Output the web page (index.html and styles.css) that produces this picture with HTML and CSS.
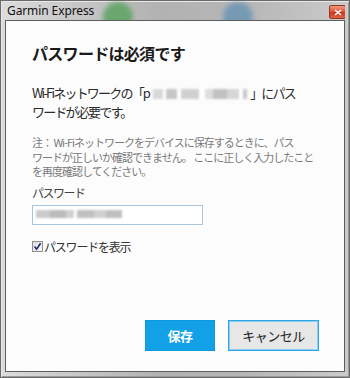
FILE: index.html
```html
<!DOCTYPE html>
<html lang="ja">
<head>
<meta charset="utf-8">
<link rel="stylesheet" href="styles.css">
</head>
<body>
<div class="window">
  <div class="titlebar">
    <span class="glow glow-green"></span>
    <span class="glow glow-blue"></span>
    <span class="title">Garmin Express</span>
    <span class="close"><svg width="8" height="7" viewBox="0 0 8 7"><path d="M1 1 L7 6 M7 1 L1 6" stroke="#fff" stroke-width="1.6"/></svg></span>
  </div>
  <div class="client">
    <h1 class="heading">パスワードは必須です</h1>
    <p class="body-text">Wi-Fiネットワークの「p<span class="blur blur-ssid"></span>」にパス<br>ワードが必要です。</p>
    <p class="note">注： Wi-Fiネットワークをデバイスに保存するときに、パス<br>ワードが正しいか確認できません。 ここに正しく入力したこと<br>を再度確認してください。</p>
    <div class="label">パスワード</div>
    <div class="input"><span class="blur blur-pass"></span></div>
    <label class="check-row">
      <span class="checkbox"><svg width="9" height="9" viewBox="0 0 9 9"><path d="M1.5 4.5 L3.6 7.2 L7.6 1.2" fill="none" stroke="#1e2b78" stroke-width="1.6"/></svg></span>
      <span class="check-label">パスワードを表示</span>
    </label>
    <div class="actions">
      <button class="btn btn-primary">保存</button>
      <button class="btn btn-secondary">キャンセル</button>
    </div>
  </div>
</div>
</body>
</html>
```

FILE: styles.css
```css
* { box-sizing: border-box; }
html, body { margin: 0; padding: 0; }
body { width: 350px; height: 378px; overflow: hidden; background: #fff; }

.window {
  width: 350px;
  height: 378px;
  border: 1px solid #6a6a6a;
  padding: 0 4px 5px 4px;
  background: linear-gradient(to right, #dcdcdc 0%, #c4c4c4 25%, #b2b2b2 45%, #b6b6b6 70%, #cbcbcb 100%);
  box-shadow: inset 1px 1px 0 #e8e8e8, inset -1px -1px 0 #9a9a9a;
  display: flex;
  flex-direction: column;
}

.titlebar {
  position: relative;
  height: 19px;
  display: flex;
  align-items: center;
  justify-content: space-between;
  padding-left: 2px;
  overflow: hidden;
}
.glow {
  position: absolute;
  width: 30px;
  height: 30px;
  border-radius: 50%;
  filter: blur(2.5px);
  top: 1px;
}
.glow-green { left: 98px; background: #4f9f55; opacity: 0.75; }
.glow-blue { left: 218px; background: #5b8fb3; opacity: 0.7; }

.title {
  position: relative;
  font-family: "Noto Sans", "Liberation Sans", sans-serif;
  font-size: 12px;
  color: #111;
  letter-spacing: -0.1px;
}
.close {
  position: relative;
  width: 17px;
  height: 14px;
  margin-top: 3px;
  margin-right: -1px;
  border: 1px solid #8c3a28;
  border-radius: 2px;
  background: linear-gradient(to bottom, #ef9a80 0%, #e0573a 45%, #c9361e 55%, #e4623d 100%);
  display: flex;
  align-items: center;
  justify-content: center;
}

.client {
  flex: 1;
  background: #fcfcfc;
  border: 1px solid #5e5e5e;
  padding: 21px 25px 20px 26px;
  display: flex;
  flex-direction: column;
  font-family: "Noto Sans CJK JP", "Noto Sans", sans-serif;
}

.heading {
  margin: 0;
  font-size: 16px;
  line-height: 22px;
  font-weight: bold;
  color: #1a1a1a;
  letter-spacing: -0.7px;
}
.body-text {
  margin: 19px 0 0 0;
  font-size: 13px;
  line-height: 19px;
  color: #2a2a2a;
  letter-spacing: -1.8px;
}
.note {
  margin: 14px 0 0 0;
  font-size: 11px;
  line-height: 14.5px;
  color: #7a7a7a;
  letter-spacing: -1px;
}
.label {
  margin-top: 6px;
  font-size: 12px;
  line-height: 16px;
  color: #444;
  letter-spacing: -1.5px;
}
.input {
  margin-top: 4px;
  width: 171px;
  height: 20px;
  border: 1px solid #a9c6dc;
  background: #fff;
  padding: 4px 0 0 3px;
  display: flex;
  align-items: flex-start;
}
.blur {
  display: inline-block;
  filter: blur(0.8px);
}
.blur-ssid {
  width: 94px;
  height: 10px;
  margin: 0 3px 0 4px;
  vertical-align: -1px;
  background: linear-gradient(to right,
    #d8d8d8 0, #d8d8d8 10px, #fff 10px, #fff 13px,
    #c6c6c6 13px, #c6c6c6 24px, #fff 24px, #fff 28px,
    #d0d0d0 28px, #d0d0d0 46px, #fff 46px, #fff 52px,
    #dedede 52px, #dedede 60px, #c2c2c2 60px, #c2c2c2 74px,
    #d6d6d6 74px, #d6d6d6 86px, #fff 86px, #fff 90px, #c8c8c8 90px);
}
.blur-pass {
  width: 86px;
  height: 8px;
  background: linear-gradient(to right,
    #cbcbcb 0, #cbcbcb 14px, #bcbcbc 14px, #bcbcbc 30px,
    #d0d0d0 30px, #d0d0d0 38px, #fff 38px, #fff 41px,
    #c0c0c0 41px, #c0c0c0 58px, #cfcfcf 58px, #cfcfcf 70px, #bfbfbf 70px);
}

.check-row {
  margin-top: 14px;
  display: flex;
  align-items: center;
  height: 16px;
}
.checkbox {
  width: 11px;
  height: 11px;
  border: 1px solid #8e8f8f;
  background: linear-gradient(135deg, #dcdcdc, #fbfbfb);
  display: flex;
  align-items: center;
  justify-content: center;
  margin-right: 1px;
}
.check-label {
  font-size: 12px;
  line-height: 16px;
  color: #333;
  letter-spacing: -1.2px;
}

.actions {
  margin-top: auto;
  display: flex;
  justify-content: flex-end;
  gap: 13px;
}
.btn {
  height: 31px;
  font-family: "Noto Sans CJK JP", "Noto Sans", sans-serif;
  font-size: 13px;
  letter-spacing: -0.5px;
  padding: 0;
  cursor: pointer;
}
.btn-primary {
  width: 70px;
  background: #12a1e6;
  border: 1px solid #0f98da;
  color: #fff;
  font-weight: bold;
}
.btn-secondary {
  width: 91px;
  background: #e7e7e7;
  border: 1px solid #2aa6e8;
  box-shadow: inset 0 0 0 1px #8fd0f2;
  color: #222;
}
```
